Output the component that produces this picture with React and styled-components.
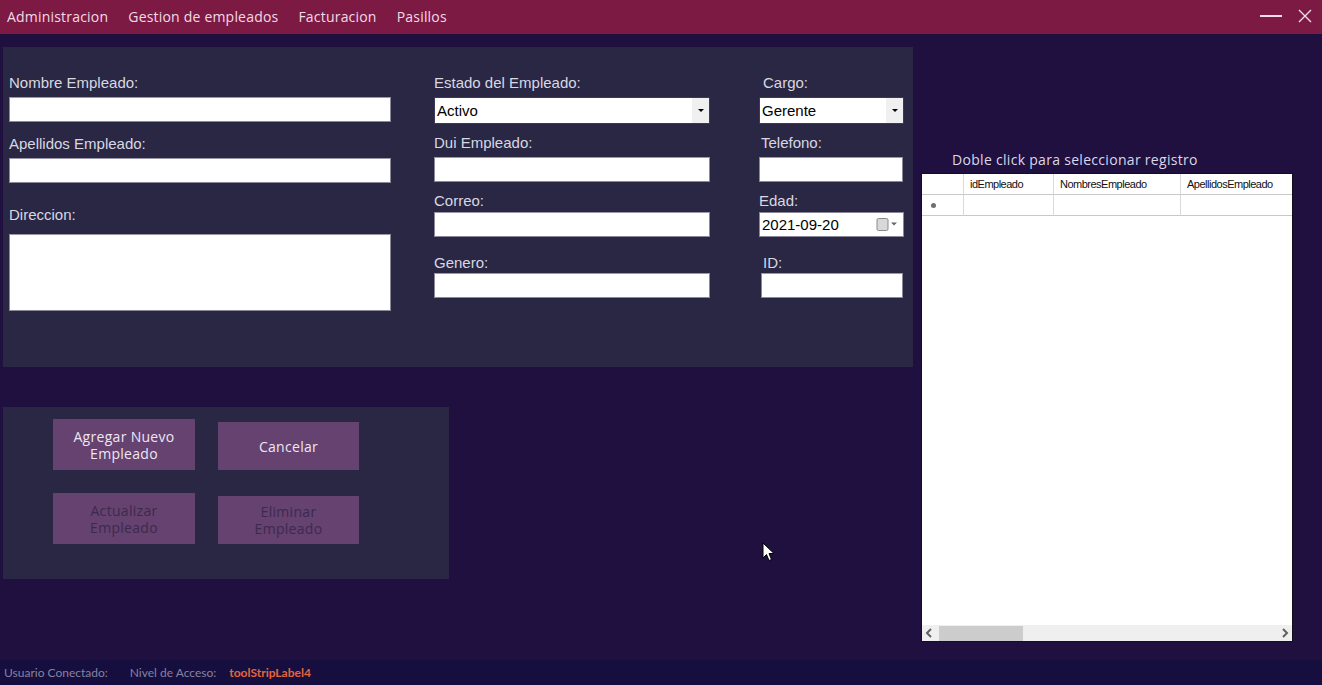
import React from "react";
import styled, { createGlobalStyle } from "styled-components";

const GlobalStyle = createGlobalStyle`
  html, body {
    margin: 0;
    padding: 0;
    background: #1f1040;
  }
  * { box-sizing: border-box; }
`;

const Window = styled.div`
  position: relative;
  width: 1322px;
  height: 685px;
  background: #1f1040;
  display: flex;
  flex-direction: column;
  overflow: hidden;
`;

const TitleBar = styled.div`
  height: 34px;
  background: #7d1a44;
  display: flex;
  align-items: center;
  justify-content: space-between;
  padding: 0 10px 2px 7px;
`;

const Menu = styled.div`
  display: flex;
  gap: 20px;
`;

const MenuItem = styled.span`
  font-family: "Open Sans", sans-serif;
  font-size: 14px;
  color: #f2dbe6;
  letter-spacing: 0.2px;
`;

const Controls = styled.div`
  display: flex;
  align-items: center;
  gap: 16px;
`;

const Minimize = styled.div`
  width: 22px;
  height: 2px;
  background: #f4dce8;
`;

const Body = styled.div`
  flex: 1;
  display: flex;
  padding: 13px 0 0 3px;
`;

const LeftColumn = styled.div`
  display: flex;
  flex-direction: column;
  gap: 40px;
`;

const FormPanel = styled.div`
  width: 910px;
  height: 320px;
  background: #2a2744;
  display: flex;
  padding: 27px 0 0 6px;
`;

const Column = styled.div`
  width: ${(p) => p.$width}px;
  margin-left: ${(p) => p.$offset || 0}px;
  display: flex;
  flex-direction: column;
`;

const Label = styled.label`
  font-family: "Liberation Sans", Arial, sans-serif;
  font-size: 15px;
  line-height: 17px;
  color: #d8d8e2;
  margin-top: ${(p) => p.$top || 0}px;
  margin-left: ${(p) => p.$indent || 0}px;
  margin-bottom: ${(p) => p.$gap || 6}px;
`;

const TextBox = styled.div`
  height: ${(p) => p.$height || 25}px;
  width: ${(p) => (p.$width ? p.$width + "px" : "100%")};
  margin-left: ${(p) => p.$indent || 0}px;
  background: #ffffff;
  border: 1px solid #8a8898;
  border-top-color: #9a98a8;
`;

const ComboBox = styled.div`
  height: 27px;
  background: #ffffff;
  display: flex;
  align-items: center;
  justify-content: space-between;
  border: 1px solid #3c3858;
`;

const ComboText = styled.span`
  font-family: "Liberation Sans", Arial, sans-serif;
  font-size: 15px;
  color: #000;
  padding-left: 2px;
`;

const ComboButton = styled.div`
  width: 17px;
  height: 100%;
  background: #f0f0f0;
  display: flex;
  align-items: center;
  justify-content: center;
  &::after {
    content: "";
    border-left: 3px solid transparent;
    border-right: 3px solid transparent;
    border-top: 3px solid #000;
  }
`;

const DateBox = styled.div`
  height: 25px;
  background: #ffffff;
  border: 1px solid #8a8898;
  display: flex;
  align-items: center;
  justify-content: space-between;
  padding-right: 3px;
`;

const ButtonPanel = styled.div`
  width: 446px;
  height: 172px;
  background: #2a2744;
  display: grid;
  grid-template-columns: 142px 141px;
  column-gap: 23px;
  row-gap: 23px;
  padding: 12px 0 0 50px;
  align-content: start;
`;

const ActionButton = styled.div`
  height: ${(p) => p.$height || 51}px;
  margin-top: ${(p) => p.$shift || 0}px;
  background: #65426f;
  display: flex;
  align-items: center;
  justify-content: center;
  text-align: center;
  font-family: "Open Sans", sans-serif;
  font-size: 14px;
  line-height: 17px;
  letter-spacing: 0.3px;
  color: ${(p) => (p.$disabled ? "#3c2a4e" : "#eee6f2")};
  padding: 0 8px;
`;

const RightColumn = styled.div`
  margin-left: 8px;
  display: flex;
  flex-direction: column;
  padding-top: 104px;
`;

const GridCaption = styled.div`
  font-family: "Open Sans", sans-serif;
  font-size: 14px;
  line-height: 18px;
  letter-spacing: 0.3px;
  color: #dcd6e8;
  margin-left: 31px;
  margin-bottom: 4px;
`;

const Grid = styled.div`
  width: 372px;
  height: 469px;
  background: #ffffff;
  border: 1px solid #101018;
  display: flex;
  flex-direction: column;
`;

const GridRow = styled.div`
  display: flex;
  height: 21px;
  flex-shrink: 0;
`;

const Cell = styled.div`
  width: ${(p) => p.$width}px;
  flex-shrink: 0;
  border-right: 1px solid #dadada;
  border-bottom: 1px solid #c8c8c8;
  font-family: "Liberation Sans", Arial, sans-serif;
  font-size: 11px;
  letter-spacing: -0.5px;
  color: #111111;
  display: flex;
  align-items: center;
  padding-left: 6px;
  &:last-child {
    flex: 1;
    border-right: none;
  }
`;

const RowMarker = styled.span`
  width: 5px;
  height: 5px;
  border-radius: 50%;
  background: #707070;
  margin-left: 3px;
`;

const GridFill = styled.div`
  flex: 1;
`;

const HScroll = styled.div`
  height: 16px;
  background: #efefef;
  display: flex;
  align-items: center;
  padding: 0 3px;
  gap: 6px;
`;

const ScrollThumb = styled.div`
  width: 84px;
  height: 15px;
  background: #cccccc;
`;

const ScrollSpace = styled.div`
  flex: 1;
`;

const StatusBar = styled.div`
  height: 25px;
  background: #150e3e;
  display: flex;
  align-items: center;
  padding-left: 4px;
  gap: 22px;
  font-family: Lato, "Open Sans", sans-serif;
  font-size: 12px;
`;

const StatusText = styled.span`
  color: ${(p) => (p.$accent ? "#e6643c" : "#85839f")};
  font-weight: ${(p) => (p.$accent ? 700 : 400)};
  margin-left: ${(p) => (p.$tight ? -9 : 0)}px;
`;

const Cursor = styled.svg`
  position: absolute;
  left: 762px;
  top: 542px;
`;

const Arrow = ({ dir }) => (
  <svg width="8" height="10" viewBox="0 0 8 10">
    <path
      d={dir === "left" ? "M6 1 L2 5 L6 9" : "M2 1 L6 5 L2 9"}
      fill="none"
      stroke="#606060"
      strokeWidth="2"
    />
  </svg>
);

const CalendarIcon = () => (
  <svg width="24" height="13" viewBox="0 0 24 13">
    <rect x="1" y="0.5" width="11" height="12" rx="1.5" fill="#d8d8d8" stroke="#8a8a8a" />
    <path d="M15 4.5 L21 4.5 L18 7.5 Z" fill="#666" />
  </svg>
);

export default function App() {
  return (
    <>
      <GlobalStyle />
      <Window>
        <TitleBar>
          <Menu>
            <MenuItem>Administracion</MenuItem>
            <MenuItem>Gestion de empleados</MenuItem>
            <MenuItem>Facturacion</MenuItem>
            <MenuItem>Pasillos</MenuItem>
          </Menu>
          <Controls>
            <Minimize />
            <svg width="14" height="14" viewBox="0 0 14 14">
              <path d="M1 1 L13 13 M13 1 L1 13" stroke="#f4dce8" strokeWidth="1.4" />
            </svg>
          </Controls>
        </TitleBar>

        <Body>
          <LeftColumn>
            <FormPanel>
              <Column $width={382}>
                <Label>Nombre Empleado:</Label>
                <TextBox />
                <Label $top={13}>Apellidos Empleado:</Label>
                <TextBox />
                <Label $top={23} $gap={11}>Direccion:</Label>
                <TextBox $height={77} />
              </Column>

              <Column $width={276} $offset={43}>
                <Label>Estado del Empleado:</Label>
                <ComboBox>
                  <ComboText>Activo</ComboText>
                  <ComboButton />
                </ComboBox>
                <Label $top={10}>Dui Empleado:</Label>
                <TextBox />
                <Label $top={10} $gap={3}>Correo:</Label>
                <TextBox />
                <Label $top={17} $gap={2}>Genero:</Label>
                <TextBox />
              </Column>

              <Column $width={145} $offset={49}>
                <Label $indent={4}>Cargo:</Label>
                <ComboBox>
                  <ComboText>Gerente</ComboText>
                  <ComboButton />
                </ComboBox>
                <Label $top={10} $indent={2}>Telefono:</Label>
                <TextBox $width={144} />
                <Label $top={10} $gap={3}>Edad:</Label>
                <DateBox>
                  <ComboText>2021-09-20</ComboText>
                  <CalendarIcon />
                </DateBox>
                <Label $top={17} $gap={2} $indent={4}>ID:</Label>
                <TextBox $width={142} $indent={2} />
              </Column>
            </FormPanel>

            <ButtonPanel>
              <ActionButton>Agregar Nuevo Empleado</ActionButton>
              <ActionButton $height={48} $shift={3}>Cancelar</ActionButton>
              <ActionButton $disabled>Actualizar Empleado</ActionButton>
              <ActionButton $disabled $height={48} $shift={3}>Eliminar Empleado</ActionButton>
            </ButtonPanel>
          </LeftColumn>

          <RightColumn>
            <GridCaption>Doble click para seleccionar registro</GridCaption>
            <Grid>
              <GridRow>
                <Cell $width={42} />
                <Cell $width={90}>idEmpleado</Cell>
                <Cell $width={127}>NombresEmpleado</Cell>
                <Cell>ApellidosEmpleado</Cell>
              </GridRow>
              <GridRow>
                <Cell $width={42}>
                  <RowMarker />
                </Cell>
                <Cell $width={90} />
                <Cell $width={127} />
                <Cell />
              </GridRow>
              <GridFill />
              <HScroll>
                <Arrow dir="left" />
                <ScrollThumb />
                <ScrollSpace />
                <Arrow dir="right" />
              </HScroll>
            </Grid>
          </RightColumn>
        </Body>

        <StatusBar>
          <StatusText>Usuario Conectado:</StatusText>
          <StatusText>Nivel de Acceso:</StatusText>
          <StatusText $accent $tight>toolStripLabel4</StatusText>
        </StatusBar>

        <Cursor width="13" height="20" viewBox="0 0 13 20">
          <path
            d="M1 1 L1 16 L4.5 12.5 L7 18.5 L9.5 17.5 L7 11.5 L12 11.5 Z"
            fill="#ffffff"
            stroke="#000000"
            strokeWidth="1"
          />
        </Cursor>
      </Window>
    </>
  );
}
